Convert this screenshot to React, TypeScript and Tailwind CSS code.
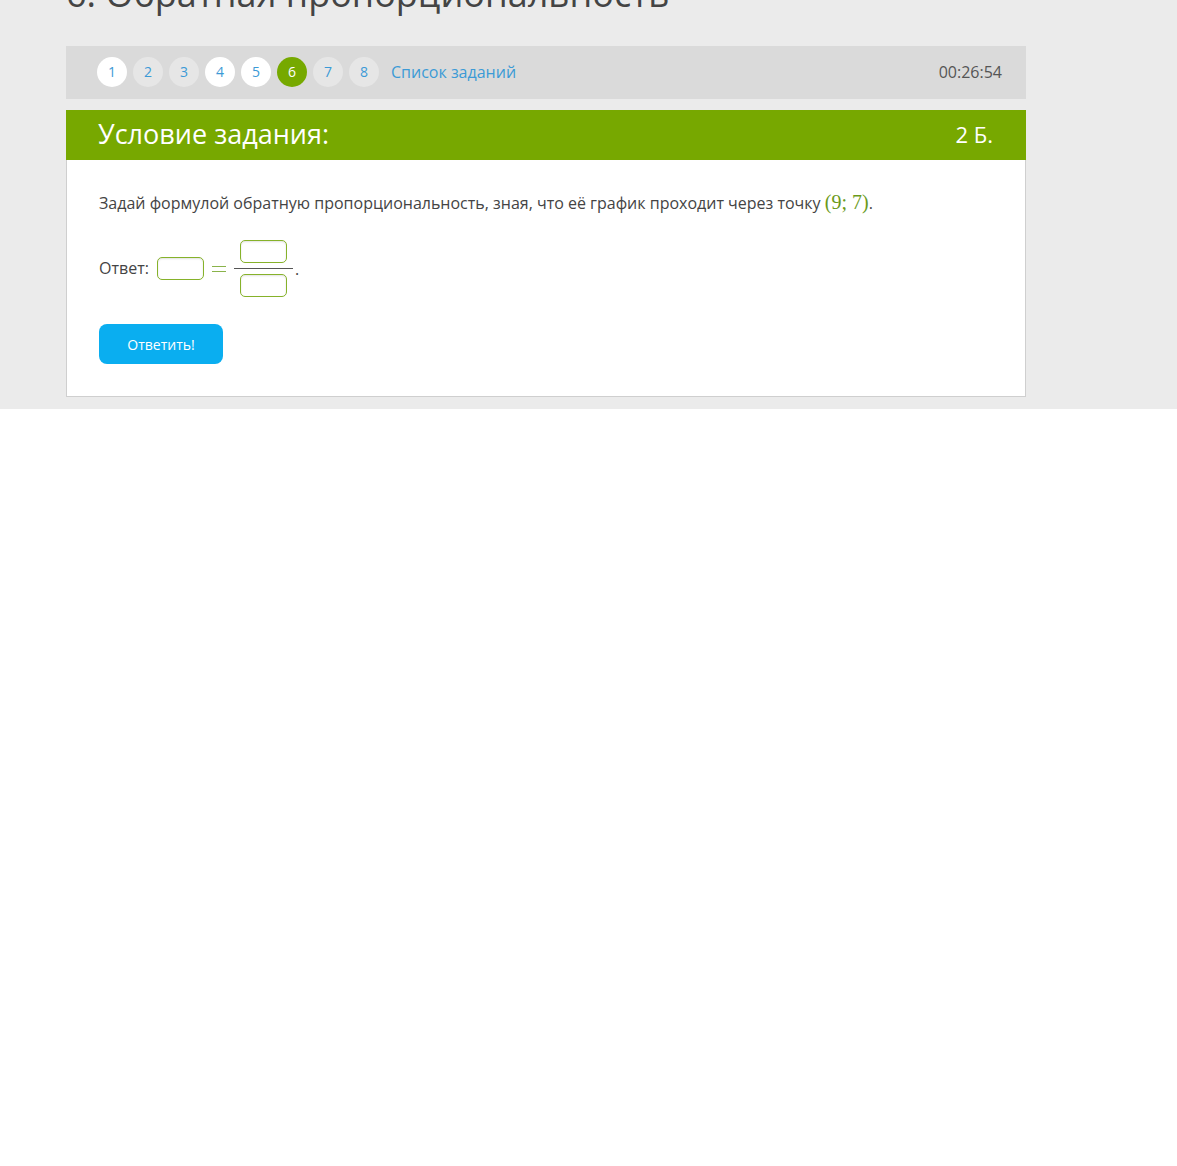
import React from "react";

const nums = [
  { n: 1, kind: "white" },
  { n: 2, kind: "gray" },
  { n: 3, kind: "gray" },
  { n: 4, kind: "white" },
  { n: 5, kind: "white" },
  { n: 6, kind: "active" },
  { n: 7, kind: "gray" },
  { n: 8, kind: "gray" },
];

function Box({ className = "" }: { className?: string }) {
  return (
    <span
      className={
        "block w-[47px] h-[23px] rounded-[5px] border border-[#86b22a] bg-white shadow-[inset_0_1px_2px_rgba(0,0,0,0.12)] " +
        className
      }
    />
  );
}

export default function App() {
  return (
    <div className="min-h-[1166px] bg-white" style={{ fontFamily: '"Open Sans", sans-serif' }}>
      <div className="bg-[#ebebeb] h-[409px] overflow-hidden">
        <div className="w-[960px] ml-[66px]">
          <h1 className="text-[36px] leading-[44px] text-[#444] mt-[-28px] font-normal whitespace-nowrap">6. Обратная пропорциональность</h1>
          <div className="mt-[30px] h-[53px] bg-[#dadada] flex items-center pl-[31px] pr-[24px] pb-[1px]">
            <div className="flex items-center gap-[6px]">
              {nums.map((it) => (
                <span
                  key={it.n}
                  className={
                    "w-[30px] h-[30px] rounded-full flex items-center justify-center text-[14px] leading-none pb-[1px] " +
                    (it.kind === "active"
                      ? "bg-[#76a900] text-white"
                      : it.kind === "white"
                      ? "bg-white text-[#3c9ad6]"
                      : "bg-[#e6e6e6] text-[#3c9ad6]")
                  }
                >
                  {it.n}
                </span>
              ))}
              <span className="ml-[6px] text-[16px] text-[#3c9ad6] mb-[1px]">Список заданий</span>
            </div>
            <span className="ml-auto text-[16px] text-[#555] mb-[1px]">00:26:54</span>
          </div>
          <div className="mt-[11px] h-[50px] bg-[#77a800] flex items-center pl-[32px] pr-[33px] pb-[2px] text-white">
            <span className="text-[27px]">Условие задания:</span>
            <span className="ml-auto text-[22px]">2 Б.</span>
          </div>
          <div className="bg-white border border-[#cfcfcf] border-t-0 h-[237px] pl-[32px] pt-[31px]">
            <p className="text-[16px] text-[#444] leading-[22px]">
              Задай формулой обратную пропорциональность, зная, что её график проходит через точку{" "}
              <span className="text-[#6b9a1a] text-[20px]" style={{ fontFamily: '"Liberation Serif", serif' }}>
                (9; 7)
              </span>
              .
            </p>
            <div className="mt-[26px] flex items-center text-[16px] text-[#444] h-[57px]">
              <span className="mb-[1px]">Ответ:</span>
              <Box className="ml-[8px]" />
              <span className="ml-[8px] mr-[8px] block w-[14px] h-[6px] border-t border-b border-[#8ab34a]" />
              <span className="flex flex-col items-center w-[59px]">
                <Box />
                <span className="w-full h-px bg-[#555] my-[5px]" />
                <Box />
              </span>
              <span className="ml-[2px]">.</span>
            </div>
            <button className="mt-[27px] w-[124px] h-[40px] rounded-[8px] bg-[#0aaef0] text-white text-[14px]">Ответить!</button>
          </div>
        </div>
      </div>
    </div>
  );
}
